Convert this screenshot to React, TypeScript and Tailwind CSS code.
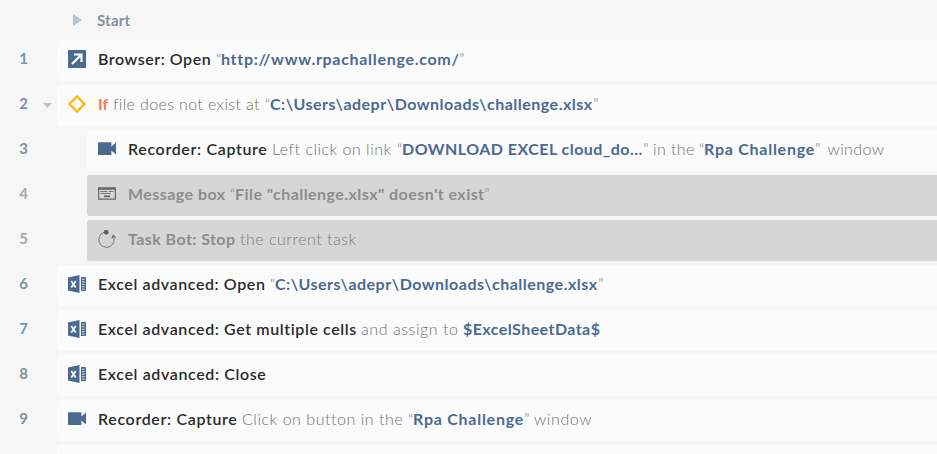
import React from 'react';

type Kind = 'title' | 'plain' | 'value' | 'quote' | 'if';
type Segment = { text: string; kind: Kind; box: string };
type IconName = 'browser' | 'if' | 'recorder' | 'message' | 'task' | 'excel';
type Line = { icon: IconName; nested?: boolean; disabled?: boolean; segments: Segment[] };

const s = (kind: Kind, text: string, box: string): Segment => ({ kind, text, box });

const lines: Line[] = [
  { icon: 'browser', segments: [s('title', 'Browser: Open', 'w-[118px] tracking-[0.54px]'), s('quote', '“', 'w-[5px]'), s('value', 'http://www.rpachallenge.com/', 'w-[238px] tracking-[0.7px]'), s('quote', '”', 'w-[5px]')] },
  { icon: 'if', segments: [s('if', 'If', 'w-[15px]'), s('plain', 'file does not exist at', 'w-[152px] tracking-[0.36px]'), s('quote', '“', 'w-[5px]'), s('value', 'C:\\Users\\adepr\\Downloads\\challenge.xlsx', 'w-[323px] tracking-[0.5px]'), s('quote', '”', 'w-[5px]')] },
  { icon: 'recorder', nested: true, segments: [s('title', 'Recorder: Capture', 'w-[144px] tracking-[0.65px]'), s('plain', 'Left click on link', 'w-[125px] tracking-[0.5px]'), s('quote', '“', 'w-[5px]'), s('value', 'DOWNLOAD EXCEL cloud_do...', 'w-[241px] tracking-[0.46px]'), s('quote', '”', 'w-[10px]'), s('plain', 'in the', 'w-[46px] tracking-[0.4px]'), s('quote', '“', 'w-[5px]'), s('value', 'Rpa Challenge', 'w-[111px] tracking-[0.74px]'), s('quote', '”', 'w-[12.5px]'), s('plain', 'window', 'w-[56px] tracking-[0.4px]')] },
  { icon: 'message', nested: true, disabled: true, segments: [s('title', 'Message box', 'w-[102px] tracking-[0.45px]'), s('quote', '“', 'w-[5px]'), s('value', 'File "challenge.xlsx" doesn\'t exist', 'w-[249px] tracking-[0.44px]'), s('quote', '”', 'w-[5px]')] },
  { icon: 'task', nested: true, disabled: true, segments: [s('title', 'Task Bot: Stop', 'w-[112px] tracking-[0.43px]'), s('plain', 'the current task', 'w-[116px] tracking-[0.5px]')] },
  { icon: 'excel', segments: [s('title', 'Excel advanced: Open', 'w-[172px] tracking-[0.6px]'), s('quote', '“', 'w-[5px]'), s('value', 'C:\\Users\\adepr\\Downloads\\challenge.xlsx', 'w-[323px] tracking-[0.5px]'), s('quote', '”', 'w-[5px]')] },
  { icon: 'excel', segments: [s('title', 'Excel advanced: Get multiple cells', 'w-[263px] tracking-[0.61px]'), s('plain', 'and assign to', 'w-[102px] tracking-[0.56px]'), s('value', '$ExcelSheetData$', 'w-[138px] tracking-[0.43px]')] },
  { icon: 'excel', segments: [s('title', 'Excel advanced: Close', 'w-[170px] tracking-[0.62px]')] },
  { icon: 'recorder', segments: [s('title', 'Recorder: Capture', 'w-[144px] tracking-[0.65px]'), s('plain', 'Click on button in the', 'w-[166px] tracking-[0.54px]'), s('quote', '“', 'w-[5px]'), s('value', 'Rpa Challenge', 'w-[111px] tracking-[0.74px]'), s('quote', '”', 'w-[10px]'), s('plain', 'window', 'w-[58px] tracking-[0.6px]')] },
];

const kindClass: Record<Kind, string> = {
  title: 'font-semibold text-[#2b2b2b]',
  plain: 'font-light text-[#707070]',
  value: 'font-bold text-[#4b6a92]',
  quote: 'font-light text-[#707070]',
  if: 'font-bold text-[#ff7850]',
};
const disabledClass: Record<Kind, string> = {
  title: 'font-bold text-[#8d8d8d]',
  plain: 'font-light text-[#7c7c7c]',
  value: 'font-bold text-[#8d8d8d]',
  quote: 'font-light text-[#7c7c7c]',
  if: 'font-bold text-[#8d8d8d]',
};

function Icon({ name }: { name: IconName }) {
  return (
    <svg className="h-[18px] w-[18px] shrink-0" viewBox="0 0 18 18" fill="none">
      {name === 'browser' && (
        <>
          <rect width="18" height="18" rx="0.8" fill="#4b6a92" />
          <path d="M4 14 13 5M6 4.5h7.5V12" stroke="#fff" strokeWidth="2.2" />
        </>
      )}
      {name === 'if' && <path d="M9 1.4 16.6 9 9 16.6 1.4 9Z" stroke="#ffb90b" strokeWidth="2.3" strokeLinejoin="round" />}
      {name === 'recorder' && <path d="M.6 2.3h12.2q.6 0 .6.6v3.6L18 2.4v12.2l-4.6-4.1v3.8q0 .7-.6.7H.6q-.6 0-.6-.7V2.9q0-.6.6-.6Z" fill="#4b6a92" />}
      {name === 'message' && (
        <>
          <path d="M.6 2.9h16.8v11.3H.6ZM1 4.2h16" stroke="#666" strokeWidth="1.2" />
          <path d="M2.5 6.5h7M11 6.5h4.5M2.5 8.5h10.5" stroke="#777" />
          <path d="M6 11.3h6" stroke="#666" strokeWidth="1.8" />
        </>
      )}
      {name === 'task' && (
        <>
          <path d="M5.8 2.4A7.7 7.7 0 1 0 15.7 7" stroke="#777" strokeWidth="1" />
          <circle cx="8.2" cy="2.3" r="2.4" fill="#5d5d5d" />
          <path d="m13.8 8.5 1.5-3.2 2.5 2.7" stroke="#666" strokeWidth="1.1" />
        </>
      )}
      {name === 'excel' && (
        <>
          <path d="M0 2.4 11.5 0v18L0 15.6Z" fill="#4b6a92" />
          <path d="m3.3 6 4.4 6.4M7.7 6l-4.4 6.4" stroke="#fff" strokeWidth="1.7" />
          <path d="M13 2h4q1 0 1 1v12q0 1-1 1h-4Z" fill="#4b6a92" />
          <path d="M14 4.2h2.6M14 6.7h2.6M14 9.2h2.6M14 11.7h2.6M14 14.2h2.6" stroke="#d9e0e9" strokeWidth="1.1" />
        </>
      )}
    </svg>
  );
}

export default function App() {
  return (
    <div className="h-[454px] w-full overflow-hidden bg-[#f6f6f6] font-['Lato',sans-serif] text-base">
      <div className="flex h-10 items-center pl-[73px] text-[15px] font-bold tracking-[0.2px] text-[#82919d]">
        <svg className="mr-[15px] h-3 w-[9px]" viewBox="0 0 9 12"><path d="M0 0v12l9-6Z" fill="#b9c4cd" /></svg>
        <span className="h-5 leading-5">Start</span>
      </div>
      <div className="flex flex-col gap-1">
        {lines.map((line, i) => (
          <div key={i} className="flex h-[41px]">
            <div className="flex w-[57px] shrink-0 items-center">
              <span className={`w-[43px] pb-[5px] pl-1 text-center text-[15px] font-bold ${line.disabled ? 'text-[#a3a7aa]' : 'text-[#82929f]'}`}>{i + 1}</span>
              {line.icon === 'if' && <svg className="h-[5px] w-[9px]" viewBox="0 0 9 5"><path d="M0 0h9L4.5 5Z" fill="#b9c4cd" /></svg>}
            </div>
            <div className={`flex min-w-0 grow items-center gap-3 pl-[11px] ${line.nested ? 'ml-[30px]' : ''} ${line.disabled ? 'rounded-l-[3px] bg-[#d6d6d6]' : 'rounded-l-sm bg-[#fbfbfb]'}`}>
              <div className="pb-[3px]"><Icon name={line.icon} /></div>
              <div className="flex whitespace-pre pb-1 leading-6">
                {line.segments.map((seg, j) => (
                  <span key={j} className={`shrink-0 ${seg.box} ${line.disabled ? disabledClass[seg.kind] : kindClass[seg.kind]}`}>{seg.text}</span>
                ))}
              </div>
            </div>
          </div>
        ))}
        <div className="ml-[57px] h-[41px] shrink-0 bg-[#fbfbfb]" />
      </div>
    </div>
  );
}
